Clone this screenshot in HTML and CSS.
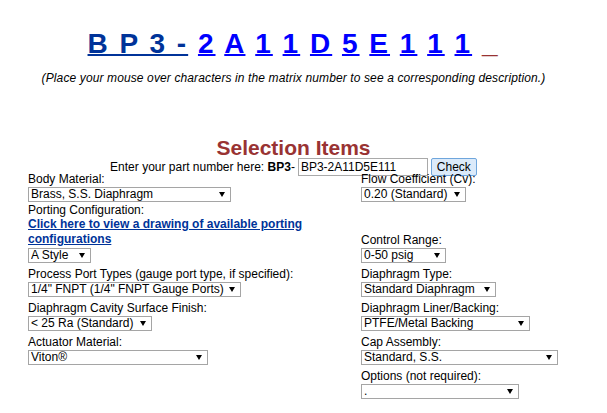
FILE: index.html
```html
<!DOCTYPE html>
<html>
<head>
<meta charset="utf-8">
<title>BP3 Matrix</title>
<link rel="stylesheet" href="styles.css">
</head>
<body>
<div class="page">
  <div class="matrix"><a class="base" href="#">B P 3 -</a> <a class="ch" href="#">2</a> <a class="ch" href="#">A</a> <a class="ch" href="#">1</a> <a class="ch" href="#">1</a> <a class="ch" href="#">D</a> <a class="ch" href="#">5</a> <a class="ch" href="#">E</a> <a class="ch" href="#">1</a> <a class="ch" href="#">1</a> <a class="ch" href="#">1</a> <span class="blank">_</span></div>
  <p class="hint">(Place your mouse over characters in the matrix number to see a corresponding description.)</p>
  <h2 class="sel-title">Selection Items</h2>
  <div class="enter">
    <span class="enter-text">Enter your part number here: <b>BP3</b>-</span>
    <input class="pn" type="text" value="BP3-2A11D5E111">
    <button class="check" type="button">Check</button>
  </div>
  <div class="grid">
    <div class="cell first">
      <span class="lbl">Body Material:</span>
      <span class="sel w-body"><select><option>Brass, S.S. Diaphragm</option></select></span>
    </div>
    <div class="cell first">
      <span class="lbl">Flow Coefficient (Cv):</span>
      <span class="sel w-flow"><select><option>0.20 (Standard)</option></select></span>
    </div>

    <div class="cell">
      <span class="lbl">Porting Configuration:</span>
      <a class="draw-link" href="#">Click here to view a drawing of available porting configurations</a>
      <span class="sel w-port"><select><option>A Style</option></select></span>
    </div>
    <div class="cell">
      <span class="lbl">Control Range:</span>
      <span class="sel w-range"><select><option>0-50 psig</option></select></span>
    </div>

    <div class="cell">
      <span class="lbl">Process Port Types (gauge port type, if specified):</span>
      <span class="sel w-proc"><select><option>1/4" FNPT (1/4" FNPT Gauge Ports)</option></select></span>
    </div>
    <div class="cell">
      <span class="lbl">Diaphragm Type:</span>
      <span class="sel w-dtype"><select><option>Standard Diaphragm</option></select></span>
    </div>

    <div class="cell">
      <span class="lbl">Diaphragm Cavity Surface Finish:</span>
      <span class="sel w-cav"><select><option>&lt; 25 Ra (Standard)</option></select></span>
    </div>
    <div class="cell">
      <span class="lbl">Diaphragm Liner/Backing:</span>
      <span class="sel w-liner"><select><option>PTFE/Metal Backing</option></select></span>
    </div>

    <div class="cell">
      <span class="lbl">Actuator Material:</span>
      <span class="sel w-act"><select><option>Viton®</option></select></span>
    </div>
    <div class="cell">
      <span class="lbl">Cap Assembly:</span>
      <span class="sel w-cap"><select><option>Standard, S.S.</option></select></span>
    </div>

    <div class="cell"></div>
    <div class="cell">
      <span class="lbl">Options (not required):</span>
      <span class="sel w-opt"><select><option>.</option></select></span>
    </div>
  </div>
</div>
</body>
</html>
```

FILE: styles.css
```css
html, body {
  margin: 0;
  padding: 0;
  background: #fff;
}

body {
  font-family: Arial, "Liberation Sans", sans-serif;
  font-size: 12px;
  color: #000;
}

.page {
  width: 571px;
  margin: 0 8px;
}

.matrix {
  margin-top: 28px;
  text-align: center;
  font-size: 28px;
  line-height: 31px;
  font-weight: bold;
  letter-spacing: 2px;
  white-space: nowrap;
}

.matrix a {
  text-decoration: underline;
  text-decoration-thickness: 2px;
}

.matrix .base {
  color: #003399;
}

.matrix .ch {
  color: #0000ff;
}

.matrix .blank {
  color: #993333;
}

.hint {
  margin: 12px 0 0;
  text-align: center;
  font-style: italic;
  line-height: 14px;
  letter-spacing: 0.12px;
}

.sel-title {
  margin: 52px 0 0;
  text-align: center;
  font-size: 21px;
  line-height: 22px;
  font-weight: bold;
  color: #993333;
}

.enter {
  display: flex;
  justify-content: center;
  align-items: center;
  height: 18px;
  margin-top: -1px;
}

.enter-text {
  line-height: 14px;
}

.pn {
  width: 130px;
  height: 18px;
  box-sizing: border-box;
  margin: 0 0 0 3px;
  padding: 0 2px;
  border: 1px solid #a9a9a9;
  font: 12px Arial, "Liberation Sans", sans-serif;
  color: #000;
  background: #fff;
}

.check {
  width: 46px;
  height: 18px;
  box-sizing: border-box;
  margin: 0 0 0 3px;
  padding: 0;
  border: 1px solid #6fa6dc;
  border-radius: 2px;
  background: #dbeafa;
  font: 12px Arial, "Liberation Sans", sans-serif;
  color: #000;
}

.grid {
  display: grid;
  grid-template-columns: 333px 200px;
  align-items: end;
  margin: -4px 0 0 20px;
}

.cell {
  display: flex;
  flex-direction: column;
  align-items: flex-start;
  padding-bottom: 4px;
}

.cell.first {
  padding-bottom: 1px;
}

.lbl {
  line-height: 14px;
  white-space: nowrap;
}

.draw-link {
  display: block;
  width: 290px;
  line-height: 15px;
  font-weight: bold;
  color: #003399;
  text-decoration: underline;
}

.sel {
  position: relative;
  display: block;
  height: 15px;
  margin-top: 1px;
}

.sel select {
  -webkit-appearance: none;
  appearance: none;
  display: block;
  width: 100%;
  height: 15px;
  box-sizing: border-box;
  margin: 0;
  padding: 0 0 0 2px;
  border: 1px solid #a5a5a5;
  border-radius: 0;
  background: #fff;
  font: 12px Arial, "Liberation Sans", sans-serif;
  line-height: 13px;
  color: #000;
}

.sel::after {
  content: "";
  position: absolute;
  right: 6px;
  top: 5px;
  width: 0;
  height: 0;
  border-left: 3px solid transparent;
  border-right: 3px solid transparent;
  border-top: 5px solid #000;
  pointer-events: none;
}

.w-body { width: 203px; }
.w-flow { width: 105px; }
.w-port { width: 63px; }
.w-range { width: 85px; }
.w-proc { width: 213px; }
.w-dtype { width: 135px; }
.w-cav { width: 124px; }
.w-liner { width: 169px; }
.w-act { width: 180px; }
.w-cap { width: 197px; }
.w-opt { width: 158px; }
```
